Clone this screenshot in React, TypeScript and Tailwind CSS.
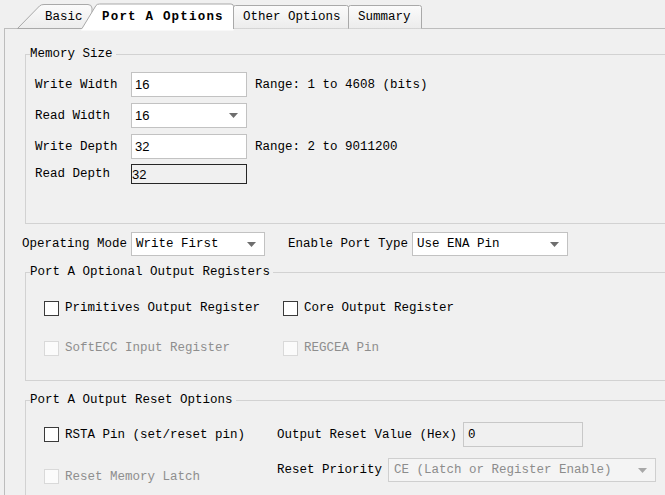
import React from "react";

const sans = "font-['Liberation_Sans',Arial,sans-serif] text-[13px]";

function Arrow({ disabled }: { disabled?: boolean }) {
  return (
    <svg width="9" height="5" viewBox="0 0 9 5" className="shrink-0">
      <path d="M0 0 L9 0 L4.5 5 Z" fill={disabled ? "#a8a8a8" : "#6e6e6e"} />
    </svg>
  );
}

function Select({
  value,
  className,
  disabled,
  valueClass,
}: {
  value: string;
  className: string;
  disabled?: boolean;
  valueClass?: string;
}) {
  return (
    <div
      className={`flex items-center justify-between border ${
        disabled ? "border-[#cfcfcf] bg-[#f4f4f4] text-[#8c8c8c]" : "border-[#c2c2c2] bg-white"
      } pr-[8px] ${className}`}
    >
      <span className={valueClass}>{value}</span>
      <Arrow disabled={disabled} />
    </div>
  );
}

function Check({ label, disabled }: { label: string; disabled?: boolean }) {
  return (
    <div className="flex items-center">
      <div
        className={`w-[15px] h-[15px] border ${
          disabled ? "border-[#d9d9d9] bg-[#fbfbfb]" : "border-[#3a3a3a] bg-white"
        }`}
      />
      <span className={`ml-[6px] ${disabled ? "text-[#8e8e8e]" : ""}`}>{label}</span>
    </div>
  );
}

function Group({
  title,
  className,
  children,
}: {
  title: string;
  className?: string;
  children: React.ReactNode;
}) {
  return (
    <fieldset className={`ml-[3px] w-[660px] border border-[#d2d2d2] p-0 ${className ?? ""}`}>
      <legend className="ml-[4px] pr-[3px] leading-[14px]">{title}</legend>
      {children}
    </fieldset>
  );
}

function Tabs() {
  return (
    <div className="relative h-[28px]">
      <svg
        width="440"
        height="31"
        viewBox="0 0 440 31"
        className="absolute left-0 top-0 z-10"
      >
        <defs>
          <linearGradient id="tg" x1="0" y1="0" x2="0" y2="1">
            <stop offset="0" stopColor="#fbfbfb" />
            <stop offset="1" stopColor="#ececec" />
          </linearGradient>
        </defs>
        <path
          d="M17.5 28.5 L39.5 6 Q41 4.5 44 4.5 L88 4.5 Q91.5 4.5 92 8 L92 28.5 Z"
          fill="url(#tg)"
          stroke="#a9a9a9"
        />
        <path
          d="M233.5 28.5 L233.5 7.5 Q233.5 5.5 235.5 5.5 L346.5 5.5 Q348.5 5.5 348.5 7.5 L348.5 28.5"
          fill="url(#tg)"
          stroke="#a9a9a9"
        />
        <path
          d="M348.5 28.5 L348.5 7.5 Q348.5 5.5 350.5 5.5 L419.5 5.5 Q421.5 5.5 421.5 7.5 L421.5 28.5"
          fill="url(#tg)"
          stroke="#a9a9a9"
        />
        <path
          d="M81 30.5 L82 28.5 L96 5.5 Q97 4 99.5 4 L231 4 Q233.5 4 233.5 6.5 L233.5 30.5 Z"
          fill="#ffffff"
        />
        <path
          d="M82 28.5 L96 5.5 Q97 4 99.5 4 L231 4 Q233.5 4 233.5 6.5 L233.5 29"
          fill="none"
          stroke="#a9a9a9"
        />
      </svg>
      <div className="relative z-20 flex h-full items-center pt-[6px] pl-[45px]">
        <span className="w-[57px]">Basic</span>
        <span className="w-[141px] font-bold tracking-[1.2px]">Port A Options</span>
        <span className="w-[115px]">Other Options</span>
        <span>Summary</span>
      </div>
    </div>
  );
}

export default function App() {
  return (
    <div className="w-[665px] h-[495px] overflow-hidden bg-[#f0f0f0] font-['Liberation_Mono',monospace] text-[12.5px] leading-[14px] text-black">
      <Tabs />
      <div className="ml-[4px] border-t border-l border-[#bdbdbd] pl-[17px] pb-[20px]">
        <Group title="Memory Size" className="mt-[18px]">
          <div className="pl-[9px] pt-[11px] pb-[39px]">
            <div className="flex items-center h-[25px]">
              <span className="w-[96px]">Write Width</span>
              <div className={`w-[116px] h-[25px] border border-[#c2c2c2] bg-white pl-[3px] flex items-center ${sans}`}>
                16
              </div>
              <span className="ml-[8px]">Range: 1 to 4608 (bits)</span>
            </div>
            <div className="flex items-center h-[25px] mt-[6px]">
              <span className="w-[96px]">Read Width</span>
              <Select value="16" className="w-[116px] h-[25px] pl-[3px]" valueClass={sans} />
            </div>
            <div className="flex items-center h-[25px] mt-[6px]">
              <span className="w-[96px]">Write Depth</span>
              <div className={`w-[116px] h-[25px] border border-[#c2c2c2] bg-white pl-[3px] flex items-center ${sans}`}>
                32
              </div>
              <span className="ml-[8px]">Range: 2 to 9011200</span>
            </div>
            <div className="flex items-center h-[20px] mt-[5px]">
              <span className="w-[96px]">Read Depth</span>
              <div className={`w-[116px] h-[20px] border border-[#262626] flex items-end leading-[16px] ${sans}`}>
                32
              </div>
            </div>
          </div>
        </Group>

        <div className="flex items-center h-[24px] mt-[8px]">
          <span className="w-[109px]">Operating Mode</span>
          <Select value="Write First" className="w-[134px] h-[24px] pl-[4px]" />
          <span className="ml-[23px] w-[124px]">Enable Port Type</span>
          <Select value="Use ENA Pin" className="w-[156px] h-[24px] pl-[4px]" />
        </div>

        <Group title="Port A Optional Output Registers" className="mt-[9px]">
          <div className="pl-[18px] pt-[19px] pb-[22px]">
            <div className="flex items-center h-[20px]">
              <div className="w-[239px]">
                <Check label="Primitives Output Register" />
              </div>
              <Check label="Core Output Register" />
            </div>
            <div className="flex items-center h-[20px] mt-[20px]">
              <div className="w-[239px]">
                <Check label="SoftECC Input Register" disabled />
              </div>
              <Check label="REGCEA Pin" disabled />
            </div>
          </div>
        </Group>

        <Group title="Port A Output Reset Options" className="mt-[12px]">
          <div className="pl-[18px] pt-[15px] pb-[20px]">
            <div className="flex items-center h-[25px]">
              <div className="w-[233px]">
                <Check label="RSTA Pin (set/reset pin)" />
              </div>
              <span className="w-[186px]">Output Reset Value (Hex)</span>
              <div className="w-[120px] h-[25px] border border-[#c8c8c8] bg-[#f0f0f0] pl-[4px] flex items-center">
                0
              </div>
            </div>
            <div className="flex items-start h-[24px] mt-[11px]">
              <div className="w-[233px] pt-[11px]">
                <Check label="Reset Memory Latch" disabled />
              </div>
              <div className="flex items-center h-[24px]">
                <span className="w-[111px]">Reset Priority</span>
                <Select
                  value="CE (Latch or Register Enable)"
                  className="w-[268px] h-[24px] pl-[5px]"
                  disabled
                />
              </div>
            </div>
          </div>
        </Group>
      </div>
    </div>
  );
}
